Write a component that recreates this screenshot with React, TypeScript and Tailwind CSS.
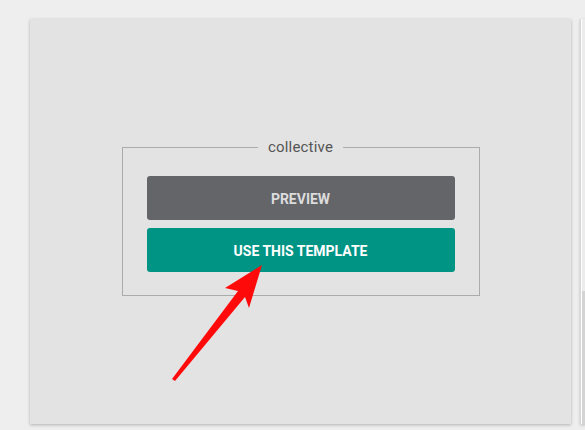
import React from 'react';

const Arrow: React.FC = () => (
  <svg className="absolute left-0 top-0 pointer-events-none" width="585" height="430" viewBox="0 0 585 430">
    <polygon
      points="262,265 249,308 245,297 175,381 172,379 238,291 225,288"
      fill="#ff0a0a"
    />
  </svg>
);

const App: React.FC = () => {
  return (
    <div
      className="relative w-[585px] h-[430px] overflow-hidden bg-[#eeeeee] flex gap-[9px] pt-[19px] pl-[30px]"
      style={{ fontFamily: 'Roboto, "Liberation Sans", sans-serif' }}
    >
      {/* Template card */}
      <div className="shrink-0 w-[541px] h-[405px] bg-[#e3e3e3] shadow-[0_1px_3px_rgba(0,0,0,0.25)] flex flex-col items-center">
        <fieldset className="mt-[119px] w-[358px] border border-[#ababab] px-[24px] pt-[20px] pb-[23px]">
          <legend className="mx-auto px-[10px] text-[15px] leading-[18px] text-[#555555] tracking-[0.2px]">
            collective
          </legend>
          <div className="flex flex-col gap-[8px]">
            <button className="h-[44px] w-full pt-[3px] rounded-[3px] bg-[#636569] text-[14px] font-bold text-[#dcdcdc] uppercase">
              Preview
            </button>
            <button className="h-[44px] w-full pt-[3px] rounded-[3px] bg-[#009485] text-[14px] font-bold text-white uppercase">
              Use this template
            </button>
          </div>
        </fieldset>
      </div>

      {/* Next card, cut off */}
      <div className="shrink-0 w-[200px] h-[405px] bg-[#e6e6e6] border-l border-[#d6d6d6] shadow-[0_1px_3px_rgba(0,0,0,0.2)] flex">
        <div className="w-[1px] bg-white" />
        <div className="flex-1 flex flex-col">
          <div className="h-[272px] bg-[#ececec]" />
          <div className="flex-1 bg-[#d4d4d4]" />
        </div>
      </div>

      <Arrow />
    </div>
  );
};

export default App;
